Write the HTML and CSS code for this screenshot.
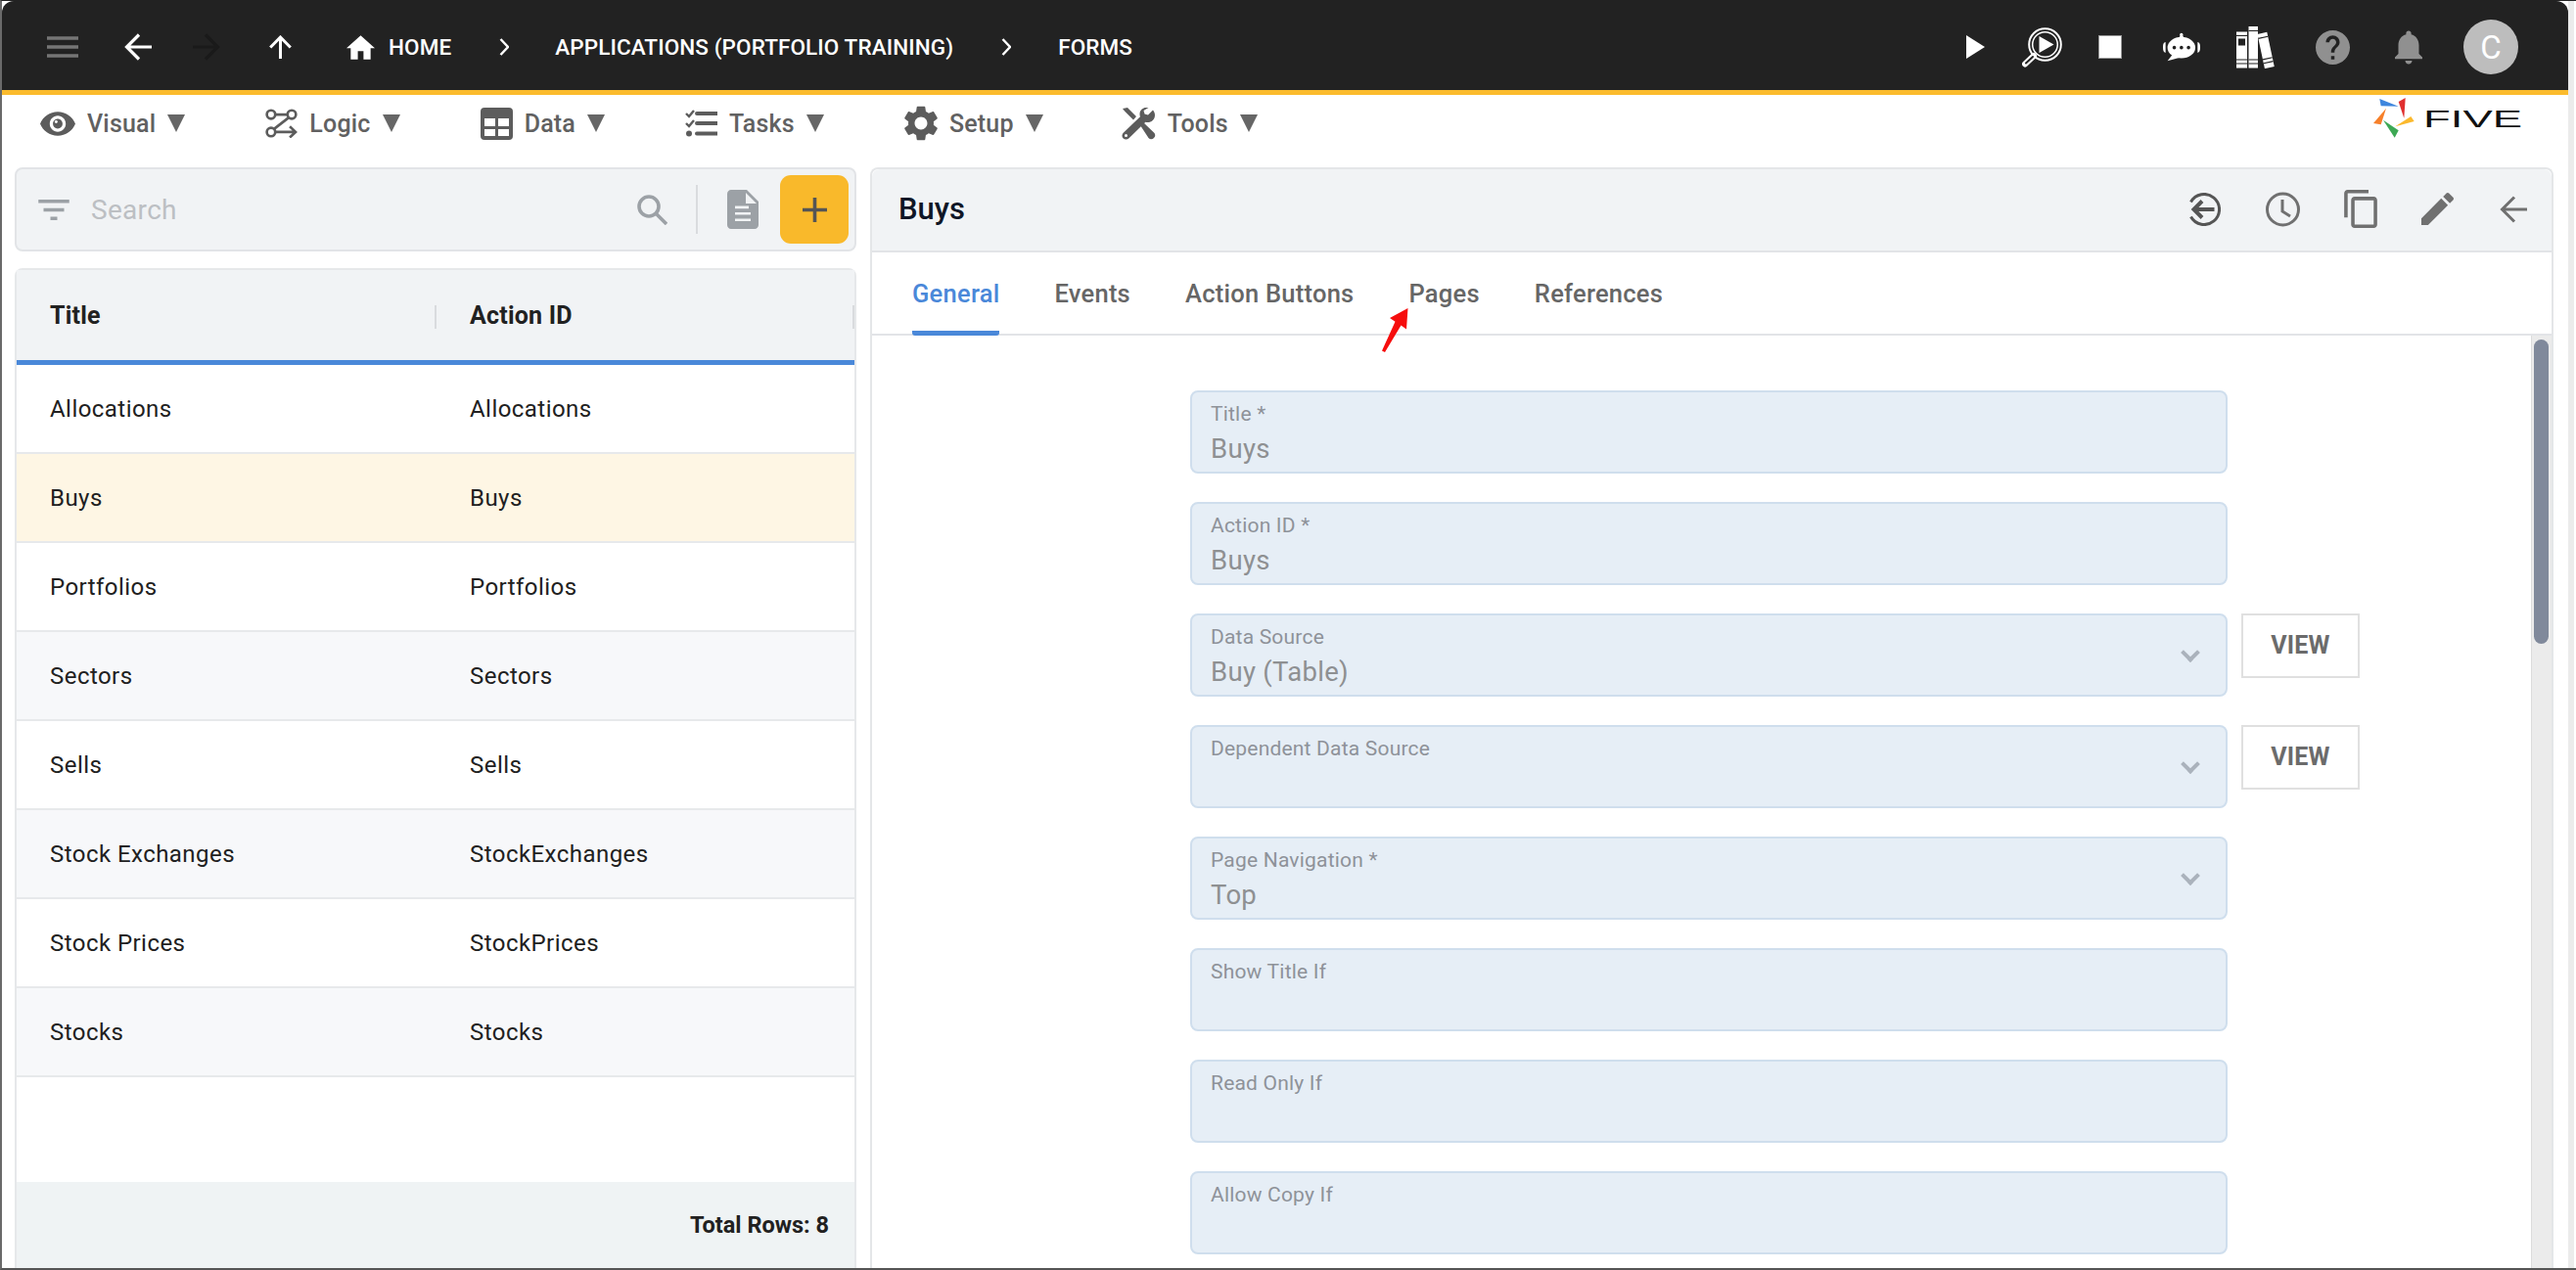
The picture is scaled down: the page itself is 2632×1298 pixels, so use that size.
FILE: index.html
```html
<!DOCTYPE html>
<html lang="en">
<head>
<meta charset="utf-8">
<title>Forms - Five</title>
<link rel="stylesheet" href="styles.css">
</head>
<body>
<div class="app">

	<!-- top bar -->
	<header class="topbar">
		<svg class="ic-menu" width="32" height="22" viewBox="0 0 32 22"><path d="M0 2h32M0 11h32M0 20h32" stroke="#757575" stroke-width="3.5"/></svg>
		<svg class="ic-back" width="28" height="28" viewBox="0 0 28 28"><path d="M28 14H3M15 1.500 2.500 14 15 26.500" fill="none" stroke="#fff" stroke-width="3.200"/></svg>
		<svg class="ic-fwd" width="28" height="28" viewBox="0 0 28 28"><path d="M0 14h25M13 1.500 25.500 14 13 26.500" fill="none" stroke="#1a1a1a" stroke-width="3.200"/></svg>
		<svg class="ic-up" width="23" height="24" viewBox="0 0 23 24"><path d="M11.500 24V3M1.200 12.500 11.500 2l10.300 10.500" fill="none" stroke="#fff" stroke-width="3"/></svg>
		<svg class="ic-home" width="29" height="25" viewBox="2 3 20 17"><path d="M10 20v-6h4v6h5v-8h3L12 3 2 12h3v8z" fill="#fff"/></svg>
		<span class="crumb crumb-home">HOME</span>
		<svg class="ic-chev" width="10" height="18" viewBox="0 0 10 18"><path d="M1.500 1 9 9l-7.500 8" fill="none" stroke="#fff" stroke-width="2.400"/></svg>
		<span class="crumb crumb-app">APPLICATIONS (PORTFOLIO TRAINING)</span>
		<svg class="ic-chev" width="10" height="18" viewBox="0 0 10 18"><path d="M1.500 1 9 9l-7.500 8" fill="none" stroke="#fff" stroke-width="2.400"/></svg>
		<span class="crumb crumb-form">FORMS</span>

		<div class="topbar-right">
			<svg class="ic-play" width="19" height="24" viewBox="0 0 19 24"><path d="M0 0l19 12L0 24z" fill="#fff"/></svg>
			<svg class="ic-zoom" width="41" height="41" viewBox="0 0 41 41">
				<circle cx="23.500" cy="17.500" r="16.300" fill="none" stroke="#fff" stroke-width="2"/>
				<circle cx="23.500" cy="17.500" r="12.800" fill="none" stroke="#fff" stroke-width="1.500"/>
				<path d="M17.500 9l15 8.500-15 8.500z" fill="#fff"/>
				<path d="M12 29 3 37.500" stroke="#fff" stroke-width="6" stroke-linecap="round"/>
				<path d="M11 30 4 36.500" stroke="#222" stroke-width="2" stroke-linecap="round"/>
			</svg>
			<span class="ic-stop"></span>
			<svg class="ic-bot" width="38" height="30" viewBox="0 0 115 90">
				<circle cx="57" cy="7" r="5" fill="#fff"/>
				<path d="M52 10h10l3 12H49z" fill="#fff"/>
				<ellipse cx="57" cy="47" rx="43" ry="33" fill="#fff"/>
				<path d="M30 68 14 88l36-10z" fill="#fff"/>
				<path d="M8 30v33C2 62 0 56 0 46s2-15 8-16zM107 30v33c6-1 8-7 8-17s-2-15-8-16z" fill="#fff"/>
				<circle cx="35" cy="47" r="5.500" fill="#222"/><circle cx="57" cy="47" r="5.500" fill="#222"/><circle cx="79" cy="47" r="5.500" fill="#222"/>
			</svg>
			<svg class="ic-books" width="42" height="43" viewBox="0 0 42 43">
				<rect x="0" y="5.500" width="11" height="37" fill="#fff"/>
				<rect x="2" y="12.500" width="7" height="7" fill="#222"/>
				<path d="M0 9.500h11M0 34h11M0 38h11" stroke="#222" stroke-width="1.200"/>
				<rect x="12.500" y="0" width="9.500" height="42.500" fill="#fff"/>
				<path d="M12.500 4.500h9.500M12.500 34h9.500M12.500 38h9.500" stroke="#222" stroke-width="1.200"/>
				<g transform="rotate(-12 30 24)">
					<rect x="25" y="6.500" width="10" height="36" fill="#fff"/>
					<path d="M25 11h10M25 33h10M25 37h10" stroke="#222" stroke-width="1.200"/>
				</g>
			</svg>
			<svg class="ic-help" width="35" height="35" viewBox="2 2 20 20"><path fill="#909090" d="M12 2C6.480 2 2 6.480 2 12s4.480 10 10 10 10-4.480 10-10S17.520 2 12 2zm1 17h-2v-2h2v2zm2.070-7.750l-.9.920C13.450 12.900 13 13.500 13 15h-2v-.5c0-1.100.45-2.100 1.170-2.830l1.240-1.260c.37-.36.59-.86.59-1.410 0-1.100-.9-2-2-2s-2 .9-2 2H8c0-2.210 1.790-4 4-4s4 1.790 4 4c0 .88-.36 1.680-.93 2.250z"/></svg>
			<svg class="ic-bell" width="28" height="35" viewBox="4 2.500 16 19.500"><path fill="#909090" d="M12 22c1.100 0 2-.9 2-2h-4c0 1.100.89 2 2 2zm6-6v-5c0-3.070-1.640-5.640-4.500-6.320V4c0-.83-.67-1.500-1.500-1.500s-1.500.67-1.500 1.500v.68C7.630 5.360 6 7.920 6 11v5l-2 2v1h16v-1l-2-2z"/></svg>
			<span class="avatar">C</span>
		</div>
	</header>

	<!-- menu -->
	<nav class="menubar">
		<a class="menu-item">
			<svg width="36" height="25" viewBox="1 4.500 22 15"><path fill="#5c5c5c" d="M12 4.500C7 4.500 2.730 7.610 1 12c1.730 4.390 6 7.500 11 7.500s9.270-3.110 11-7.500c-1.730-4.390-6-7.500-11-7.500zM12 17c-2.760 0-5-2.240-5-5s2.240-5 5-5 5 2.240 5 5-2.240 5-5 5zm0-8c-1.660 0-3 1.340-3 3s1.340 3 3 3 3-1.340 3-3-1.340-3-3-3z"/><circle cx="11" cy="10.800" r=".9" fill="#fff"/></svg>
			<span class="menu-txt">Visual</span><span class="tri"></span>
		</a>
		<a class="menu-item">
			<svg width="33" height="30" viewBox="0 0 100 90" fill="none" stroke="#5c5c5c" stroke-width="8"><circle cx="18" cy="18" r="13"/><circle cx="82" cy="18" r="13"/><circle cx="18" cy="72" r="13"/><path d="M31 18h38M72 28 28 62M31 72h62M76 55l18 17-18 17"/></svg>
			<span class="menu-txt">Logic</span><span class="tri"></span>
		</a>
		<a class="menu-item">
			<svg width="33" height="33" viewBox="0 0 33 33"><rect width="33" height="33" rx="4" fill="#5c5c5c"/><path d="M4 11h11v8H4zM18 11h11v8H18zM4 22h11v7H4zM18 22h11v7H18z" fill="#fff"/></svg>
			<span class="menu-txt">Data</span><span class="tri"></span>
		</a>
		<a class="menu-item">
			<svg width="33" height="28" viewBox="0 0 33 28" fill="none" stroke="#5c5c5c"><path d="M1 4l3 3 5-6M1 14l3 3 5-6" stroke-width="2.400"/><path d="M12 4h21M12 14h21M12 24.500h21" stroke-width="4" stroke-linecap="round"/><circle cx="4" cy="24.500" r="3" fill="#5c5c5c" stroke="none"/></svg>
			<span class="menu-txt">Tasks</span><span class="tri"></span>
		</a>
		<a class="menu-item">
			<svg width="34" height="36" viewBox="2.600 2 18.800 20"><path fill="#5c5c5c" d="M19.140 12.940c.04-.3.06-.61.06-.94 0-.32-.02-.64-.07-.94l2.030-1.580c.18-.14.23-.41.12-.61l-1.920-3.320c-.12-.22-.37-.29-.59-.22l-2.390.96c-.5-.38-1.030-.7-1.620-.94l-.36-2.540c-.04-.24-.24-.41-.48-.41h-3.840c-.24 0-.43.17-.47.41l-.36 2.540c-.59.24-1.130.57-1.620.94l-2.390-.96c-.22-.08-.47 0-.59.22L2.740 8.870c-.12.21-.08.47.12.61l2.030 1.580c-.05.3-.09.63-.09.94s.02.64.07.94l-2.030 1.580c-.18.14-.23.41-.12.61l1.920 3.320c.12.22.37.29.59.22l2.390-.96c.5.38 1.030.7 1.620.94l.36 2.540c.05.24.24.41.48.41h3.840c.24 0 .44-.17.47-.41l.36-2.540c.59-.24 1.130-.56 1.620-.94l2.390.96c.22.08.47 0 .59-.22l1.920-3.320c.12-.22.07-.47-.12-.61l-2.010-1.580zM12 15.600c-1.980 0-3.600-1.620-3.600-3.600s1.620-3.600 3.600-3.600 3.600 1.620 3.600 3.600-1.620 3.600-3.600 3.600z"/></svg>
			<span class="menu-txt">Setup</span><span class="tri"></span>
		</a>
		<a class="menu-item menu-tools">
			<svg width="36" height="33" viewBox="0 0 36 33">
				<path fill="#5c5c5c" d="M2 1 7 0l9 9-3 3.500-9-9zM20 18l3-3 11 10.500c1.700 1.700 1.700 4 0 5.500s-3.800 1.700-5.500 0z"/>
				<path fill="#5c5c5c" d="M33 2.500l-5 5-3.500-1 -1-3.500 5-3c-4.500-1.200-9 2-9 6.700 0 1 .2 1.800.5 2.600L3 25.500c-2 2-2 4.500-.3 6s4 1.500 5.800-.3L25.400 14.700c4.800 1.500 9.600-2 9.600-7 0-1.900-.7-3.800-2-5.200z"/>
				<circle cx="5.500" cy="28.500" r="1.500" fill="#fff"/>
			</svg>
			<span class="menu-txt">Tools</span><span class="tri"></span>
		</a>
		<svg class="logo" width="152" height="41" viewBox="0 0 152 41">
			<path d="M6.300 1 25.700 8.700 7.700 8.300z" fill="#3f86dd"/>
			<path d="M25.700 4 32.700 0 31.300 20.700z" fill="#e02f2f"/>
			<path d="M22.300 29.300 38.300 19 41.700 24z" fill="#fbb92d"/>
			<path d="M10 22.700 25.700 33.300 21.700 40.700z" fill="#3da854"/>
			<path d="M13 10.700 7.700 27.300 0 26z" fill="#f7802a"/>
			<text class="logo-txt" x="51" y="30" textLength="101" lengthAdjust="spacingAndGlyphs">FIVE</text>
		</svg>
	</nav>

	<div class="main">

		<!-- left list -->
		<section class="side">
			<div class="searchbar">
				<svg class="ic-filter" width="32" height="21" viewBox="3 6 18 12"><path fill="#9ca1a6" d="M10 18h4v-2h-4v2zM3 6v2h18V6H3zm3 7h12v-2H6v2z"/></svg>
				<span class="search-txt">Search</span>
				<svg class="ic-search" width="31" height="31" viewBox="0 0 31 31" fill="none" stroke="#9ca1a6" stroke-width="3.600"><circle cx="12" cy="12" r="10"/><path d="M19 19l11 11"/></svg>
				<span class="search-div"></span>
				<svg class="ic-doc" width="34" height="40" viewBox="4 2 16 20"><path fill="#9ca1a6" d="M14 2H6c-1.100 0-1.990.9-1.990 2L4 20c0 1.100.89 2 1.990 2H18c1.100 0 2-.9 2-2V8l-6-6zm2 16H8v-1.300h8V18zm0-3.200H8v-1.300h8v1.300zm-1-3.200H8v-1.300h7v1.300zM13.500 9V3.500L19 9h-5.500z"/></svg>
				<button class="btn-add"><svg width="25" height="25" viewBox="0 0 25 25"><path d="M12.500 0v25M0 12.500h25" stroke="#555" stroke-width="3.600"/></svg></button>
			</div>

			<div class="grid">
				<div class="grid-head">
					<div class="cell">Title</div>
					<div class="cell">Action ID</div>
				</div>
				<div class="grid-row"><div class="cell">Allocations</div><div class="cell">Allocations</div></div>
				<div class="grid-row sel"><div class="cell">Buys</div><div class="cell">Buys</div></div>
				<div class="grid-row"><div class="cell">Portfolios</div><div class="cell">Portfolios</div></div>
				<div class="grid-row odd"><div class="cell">Sectors</div><div class="cell">Sectors</div></div>
				<div class="grid-row"><div class="cell">Sells</div><div class="cell">Sells</div></div>
				<div class="grid-row odd"><div class="cell">Stock Exchanges</div><div class="cell">StockExchanges</div></div>
				<div class="grid-row"><div class="cell">Stock Prices</div><div class="cell">StockPrices</div></div>
				<div class="grid-row odd"><div class="cell">Stocks</div><div class="cell">Stocks</div></div>
				<div class="grid-foot">Total Rows: 8</div>
			</div>
		</section>

		<!-- right form -->
		<section class="panel">
			<div class="panel-head">
				<h2 class="panel-title">Buys</h2>
				<svg class="ic-hist" width="34" height="34" viewBox="0 0 34 34" fill="none" stroke="#555" stroke-width="3"><path d="M3.500 9.500A15.500 15.500 0 1 1 3.500 24.500"/><path d="M27.500 17H7M15 8.500 6.500 17l8.500 8.500" stroke-width="4"/></svg>
				<svg class="ic-clock" width="35" height="36" viewBox="0 0 35 36" fill="none" stroke="#707070" stroke-width="3"><circle cx="17.500" cy="18" r="16"/><path d="M17 8v12l8 5"/></svg>
				<svg class="ic-copy" width="34" height="39" viewBox="2 1 19 22"><path fill="#707070" d="M16 1H4c-1.100 0-2 .9-2 2v14h2V3h12V1zm3 4H8c-1.100 0-2 .9-2 2v14c0 1.100.9 2 2 2h11c1.100 0 2-.9 2-2V7c0-1.100-.9-2-2-2zm0 16H8V7h11v14z"/></svg>
				<svg class="ic-pen" width="33" height="33" viewBox="3 3 18 18"><path fill="#707070" d="M3 17.250V21h3.750L17.810 9.940l-3.750-3.750L3 17.250zM20.710 7.040c.39-.39.39-1.020 0-1.410l-2.340-2.340c-.39-.39-1.020-.39-1.410 0l-1.830 1.830 3.750 3.750 1.830-1.830z"/></svg>
				<svg class="ic-close" width="28" height="28" viewBox="0 0 28 28"><path d="M28 14H3M15 1.500 2.500 14 15 26.500" fill="none" stroke="#707070" stroke-width="3"/></svg>
			</div>

			<div class="tabs">
				<a class="tab on">General</a>
				<a class="tab">Events</a>
				<a class="tab">Action Buttons</a>
				<a class="tab">Pages</a>
				<a class="tab">References</a>
			</div>
			<svg class="red-arrow" width="30" height="46" viewBox="0 0 30 46"><path d="M27.500 0 26 21.500l-5.500-4L4 45 1 43.500l13.500-29.800L9 10z" fill="#f60d0d"/></svg>

			<div class="panel-body">
				<div class="form">
					<div class="line"><div class="field"><label>Title *</label><div class="val">Buys</div></div></div>
					<div class="line"><div class="field"><label>Action ID *</label><div class="val">Buys</div></div></div>
					<div class="line">
						<div class="field"><label>Data Source</label><div class="val">Buy (Table)</div><span class="chev"></span></div>
						<button class="btn-view">VIEW</button>
					</div>
					<div class="line">
						<div class="field"><label>Dependent Data Source</label><div class="val"></div><span class="chev"></span></div>
						<button class="btn-view">VIEW</button>
					</div>
					<div class="line"><div class="field"><label>Page Navigation *</label><div class="val">Top</div><span class="chev"></span></div></div>
					<div class="line"><div class="field"><label>Show Title If</label><div class="val"></div></div></div>
					<div class="line"><div class="field"><label>Read Only If</label><div class="val"></div></div></div>
					<div class="line"><div class="field"><label>Allow Copy If</label><div class="val"></div></div></div>
				</div>
				<div class="scroll"><div class="thumb"></div></div>
			</div>
		</section>
	</div>
</div>
</body>
</html>
```

FILE: styles.css
```css
/** common **/
*{margin:0; padding:0; box-sizing:border-box;}
html, body{height:100%; overflow:hidden; background:#fff;}
body{font-family:"Roboto", "Liberation Sans", sans-serif; color:#212121;}
svg{display:block; flex:none;}

.app{
	display:flex;
	flex-direction:column;
	width:2632px;
	height:1298px;
	padding-right:8px;
	border-left:2px solid #6a6a6a;
	border-top:1px solid #222;
	border-bottom:2px solid #555;
	background:#fff linear-gradient(#ebebeb, #ebebeb) no-repeat 2622px 0 / 6px 100%;
}

/** top bar **/
.topbar{
	display:flex;
	align-items:center;
	flex:none;
	height:96px;
	padding:3px 51px 0 46px;
	border-bottom:5px solid #fbbb2d;
	border-radius:12px 12px 0 0;
	background:#222;
}
.ic-back{margin-left:47px;}
.ic-fwd{margin-left:42px;}
.ic-up{margin-left:50px;}
.ic-home{margin-left:56px;}
.ic-chev{margin-left:49px;}
.crumb{font-size:22.500px; font-weight:500; color:#fff; letter-spacing:.1px; white-space:nowrap;}
.crumb-home{margin-left:14px;}
.crumb-app{margin-left:47px;}
.crumb-form{margin-left:48px;}

.topbar-right{display:flex; align-items:center; margin-left:auto;}
.ic-zoom{margin-left:38px;}
.ic-stop{display:block; width:22px; height:22px; margin-left:38px; background:#fff; outline:1px solid #999;}
.ic-bot{margin-left:43px;}
.ic-books{margin-left:37px;}
.ic-help{margin-left:39px;}
.ic-bell{margin-left:46px;}
.avatar{
	display:flex;
	align-items:center;
	justify-content:center;
	width:56px;
	height:56px;
	margin-left:42px;
	border-radius:50%;
	background:#bdbdbd;
	color:#fff;
	font-size:33px;
}

/** menu **/
.menubar{
	display:flex;
	align-items:center;
	flex:none;
	height:58px;
	margin-bottom:16px;
	padding-left:39px;
	gap:82px;
}
.menu-item{display:flex; align-items:center; color:#616161;}
.menu-tools{margin-left:-3px;}
.menu-txt{margin-left:12px; font-size:25px; font-weight:500; letter-spacing:.2px;}
.tri{width:0; height:0; margin-left:12px; border-left:9px solid transparent; border-right:9px solid transparent; border-top:18px solid #666;}
.logo{align-self:flex-start; margin:3px 47px 0 auto;}
.logo-txt{font-family:"Liberation Sans", sans-serif; font-size:23px; fill:#111;}

/** layout **/
.main{display:flex; flex:1; min-height:0; gap:14px; padding-left:13px; margin-right:15px;}
.side{display:flex; flex-direction:column; width:860px; gap:17px;}
.panel{position:relative; display:flex; flex-direction:column; flex:1; min-width:0; border:2px solid #e4e6e8; border-bottom:0; border-radius:8px 8px 0 0;}

/** search **/
.searchbar{
	display:flex;
	align-items:center;
	flex:none;
	height:86px;
	padding:0 6px 0 22px;
	border:2px solid #e2e4e7;
	border-radius:8px;
	background:#f1f3f5;
}
.search-txt{margin-left:22px; font-size:28px; letter-spacing:.3px; color:#bcbfc3;}
.ic-search{margin-left:auto;}
.search-div{width:2px; height:50px; margin-left:29px; background:#d9dbde;}
.ic-doc{margin-left:29px;}
.btn-add{display:flex; align-items:center; justify-content:center; width:70px; height:70px; margin-left:21px; border:0; border-radius:11px; background:#f9b92b;}

/** list **/
.grid{display:flex; flex-direction:column; flex:1; min-height:0; border:2px solid #e6e8ea; border-bottom:0; border-radius:8px 8px 0 0;}
.grid-head, .grid-row{display:grid; grid-template-columns:429px 1fr; flex:none; padding-left:34px;}
.grid-head{position:relative; height:97px; border-bottom:5px solid #4a88d9; background:#f1f3f5; font-size:25px; font-weight:700; letter-spacing:.2px;}
.grid-head .cell{position:relative; display:flex; align-items:center;}
.grid-head .cell + .cell:before{content:""; position:absolute; left:-36px; top:36px; width:2px; height:24px; background:#d9dbde;}
.grid-head:after{content:""; position:absolute; right:0; top:36px; width:2px; height:24px; background:#d9dbde;}
.grid-row{height:91px; border-bottom:2px solid #e7e9eb; font-size:24px; letter-spacing:.45px;}
.grid-row .cell{display:flex; align-items:center;}
.grid-row.sel{background:#fef6e4;}
.grid-row.odd{background:#f7f8fa;}
.grid-foot{display:flex; align-items:center; justify-content:flex-end; height:88px; margin-top:auto; padding-right:26px; background:#eff3f4; font-size:23.500px; font-weight:700;}

/** panel **/
.panel-head{display:flex; align-items:center; flex:none; height:85px; padding:0 25px 2px 0; border-bottom:2px solid #e2e4e7; background:#f1f3f5; border-radius:8px 8px 0 0;}
.panel-title{margin-left:27px; margin-right:auto; font-size:31px; font-weight:500; color:#0f1626;}
.ic-clock{margin-left:46px;}
.ic-copy{margin-left:45px;}
.ic-pen{margin-left:45px;}
.ic-close{margin-left:47px;}

.tabs{display:flex; flex:none; height:85px; padding-left:41px; gap:56px; border-bottom:2px solid #e2e4e7;}
.tab{display:flex; align-items:center; height:85px; padding-top:3px; border-bottom:5px solid transparent; font-size:25.500px; font-weight:500; letter-spacing:.25px; color:#666;}
.tab.on{border-bottom-color:#4a88d9; border-radius:0 0 3px 3px; color:#4a88d9;}
/* red mark on the screenshot */
.red-arrow{position:absolute; left:520px; top:142px;}

.panel-body{display:flex; flex:1; min-height:0; overflow:hidden;}
.form{flex:1; padding:56px 0 0 325px;}
.line{display:flex; align-items:flex-start; gap:14px; margin-bottom:29px;}
.field{position:relative; width:1060px; height:85px; padding:10px 19px 0; border:2px solid #cfdeed; border-radius:8px; background:#e6eef6;}
.field label{display:block; height:24px; font-size:21px; line-height:24px; letter-spacing:.2px; color:#8e9299;}
.val{height:34px; margin-top:7px; font-size:27.500px; line-height:34px; letter-spacing:.3px; color:#8e9092;}
.chev{position:absolute; right:29px; top:31px; width:14px; height:14px; border-right:4px solid #aab2bc; border-bottom:4px solid #aab2bc; transform:rotate(45deg);}
.btn-view{width:121px; height:66px; padding-bottom:2px; border:2px solid #e0e0e0; background:#fff; font-family:inherit; font-size:25px; font-weight:700; letter-spacing:.2px; color:#6b6b6b;}

.scroll{flex:none; width:21px; padding:4px 3px 0 2px; border-left:1px solid #dcdcdc; background:#ebebeb;}
.thumb{height:311px; border-radius:8px; background:#80899b;}
```
